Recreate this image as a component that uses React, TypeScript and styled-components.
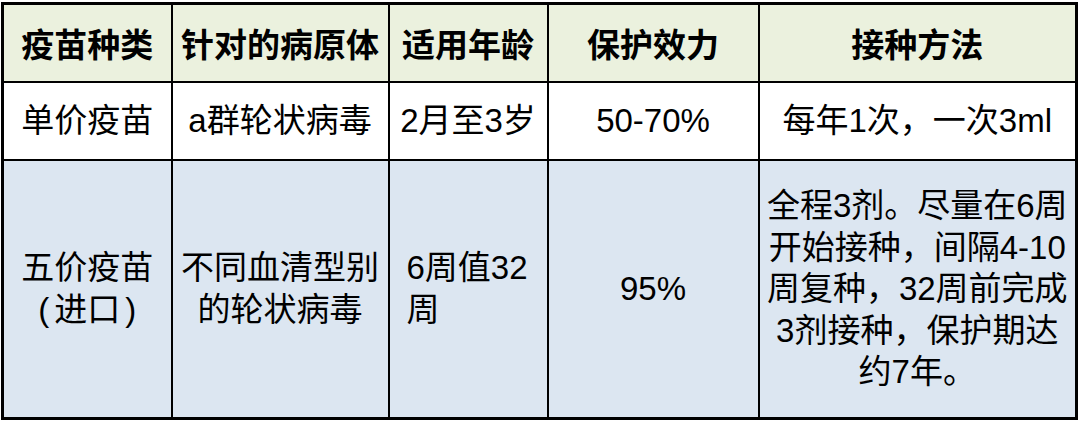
import React from 'react';
import styled, { createGlobalStyle } from 'styled-components';

const GlobalStyle = createGlobalStyle`
    html, body {
        margin: 0;
        padding: 0;
        background: #ffffff;
    }
    body {
        font-family: "Liberation Sans", "Noto Sans CJK SC", sans-serif;
        color: #000;
    }
`;

const Page = styled.div`
    padding: 2px 0 0 1px;
`;

const VaccineTable = styled.table`
    width: 1077px;
    table-layout: fixed;
    border-collapse: collapse;
    border: 3px solid #000; /* Outer border */
`;

const HeaderRow = styled.tr`
    height: 78px;
    background-color: #ebf1de;
`;

const BodyRow = styled.tr<{ $bg: string; $height: number }>`
    height: ${(p) => p.$height}px;
    background-color: ${(p) => p.$bg};
`;

const HeaderCell = styled.th`
    border: 2px solid #000;
    padding: 0 2px;
    font-size: 33px;
    font-weight: bold;
    text-align: center;
    vertical-align: middle;
    white-space: nowrap;
`;

const Cell = styled.td<{ $align?: 'left' | 'center'; $padLeft?: number }>`
    border: 2px solid #000;
    padding: 0 2px 0 ${(p) => (p.$padLeft !== undefined ? p.$padLeft : 2)}px;
    font-size: 33px;
    line-height: 41.5px;
    text-align: ${(p) => p.$align || 'center'};
    vertical-align: middle;
    white-space: nowrap;
`;

const Paren = styled.span`
    margin: 0 5px;
`;

const columns = [169, 217, 159, 211, 318];
const headers = ['疫苗种类', '针对的病原体', '适用年龄', '保护效力', '接种方法'];

export default function App() {
    return (
        <Page>
            <GlobalStyle />
            <VaccineTable>
                <colgroup>
                    {columns.map((w, i) => (
                        <col key={i} style={{ width: w }} />
                    ))}
                </colgroup>
                <thead>
                    <HeaderRow>
                        {headers.map((h) => (
                            <HeaderCell key={h}>{h}</HeaderCell>
                        ))}
                    </HeaderRow>
                </thead>
                <tbody>
                    <BodyRow $bg="#ffffff" $height={78}>
                        <Cell>单价疫苗</Cell>
                        <Cell>a群轮状病毒</Cell>
                        <Cell>2月至3岁</Cell>
                        <Cell>50-70%</Cell>
                        <Cell>每年1次，一次3ml</Cell>
                    </BodyRow>
                    <BodyRow $bg="#dce6f1" $height={259}>
                        <Cell>
                            五价疫苗
                            <br />
                            (<Paren>进口</Paren>)
                        </Cell>
                        <Cell>
                            不同血清型别
                            <br />
                            的轮状病毒
                        </Cell>
                        <Cell $align="left" $padLeft={17}>
                            6周值32
                            <br />
                            周
                        </Cell>
                        <Cell>95%</Cell>
                        <Cell>
                            全程3剂。尽量在6周
                            <br />
                            开始接种，间隔4-10
                            <br />
                            周复种，32周前完成
                            <br />
                            3剂接种，保护期达
                            <br />
                            约7年。
                        </Cell>
                    </BodyRow>
                </tbody>
            </VaccineTable>
        </Page>
    );
}
